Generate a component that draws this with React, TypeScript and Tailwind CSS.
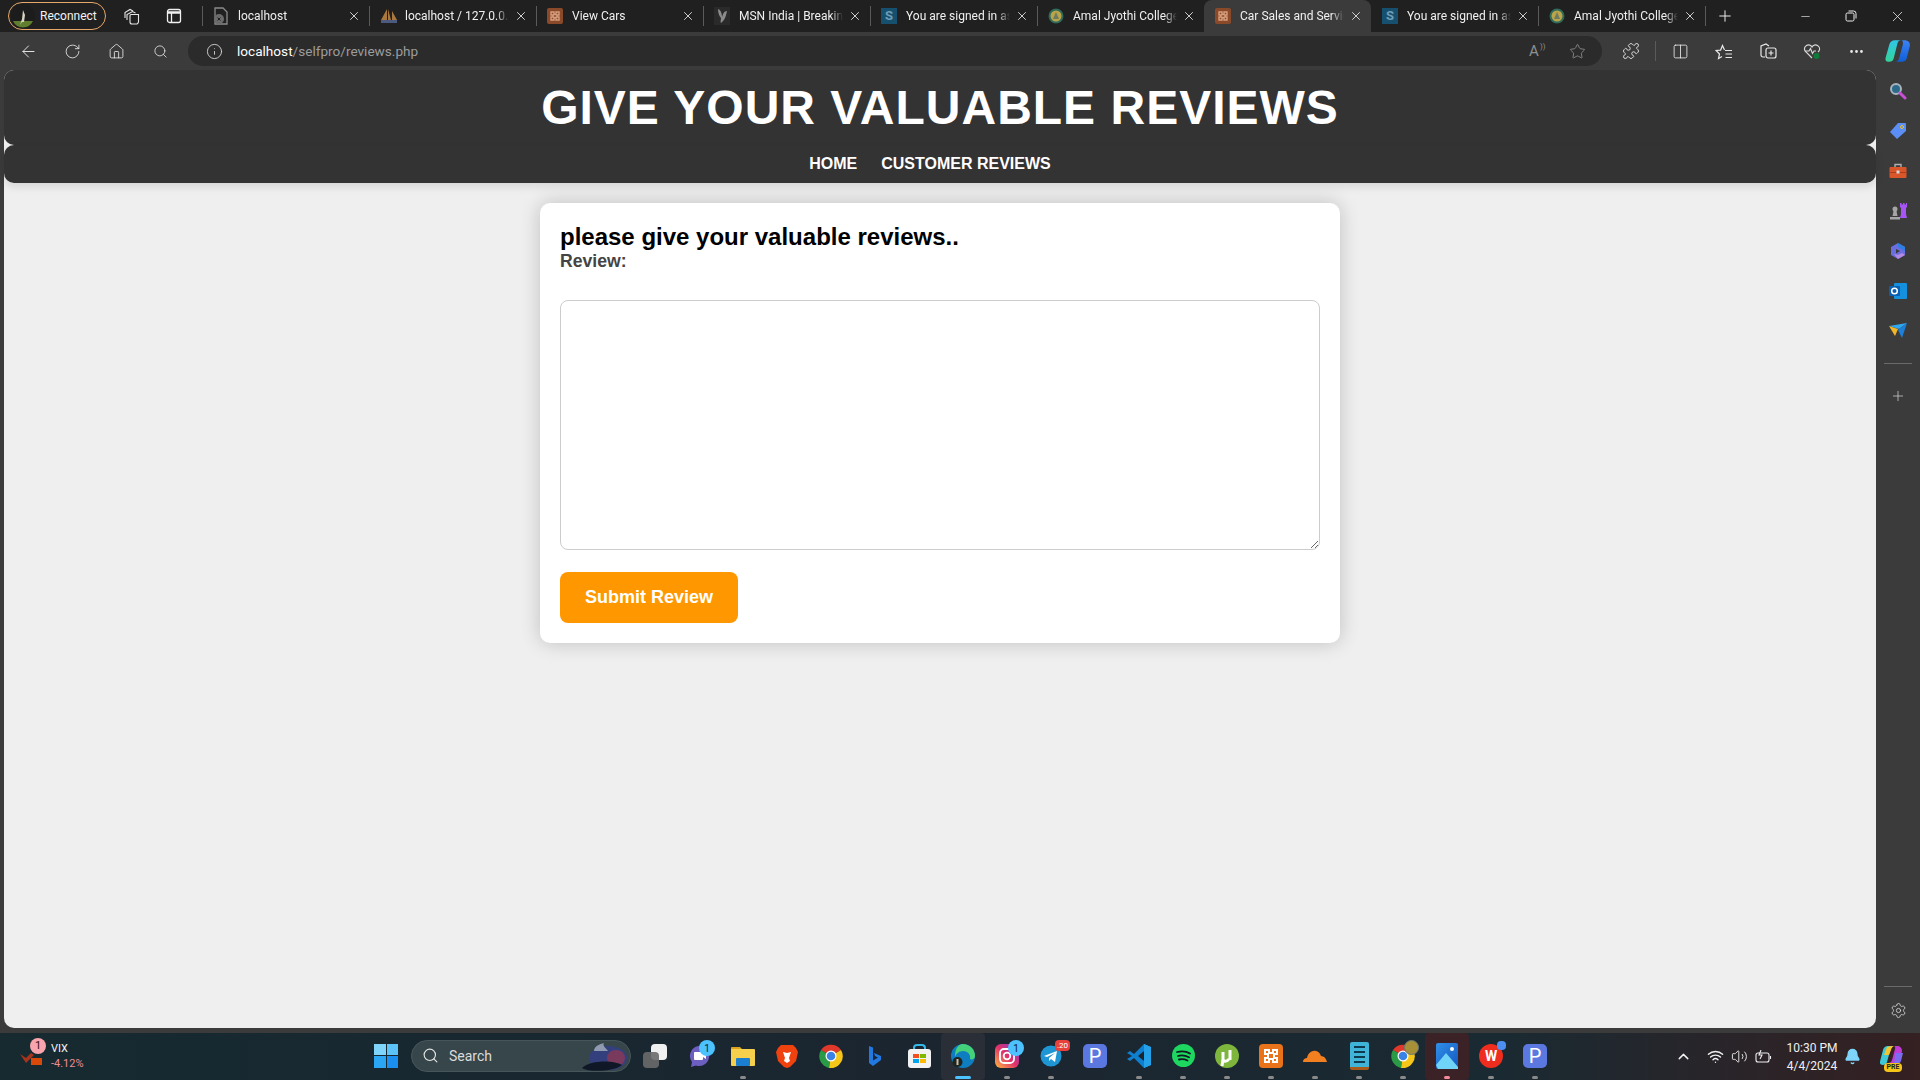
import { ArrowLeft, RotateCw, Home, Search, Info, Star, Puzzle, Columns2, Ellipsis, Plus, X, Minus, Settings, ChevronUp, Wifi, Volume2, Bell } from "lucide-react";
import type { ReactNode } from "react";

const XamppFav = () => (
    <svg width="16" height="16" viewBox="0 0 16 16"><rect width="16" height="16" rx="2" fill="#8a4a2a" /><path d="M4 4h3v2.500h2V4h3v3h-2v2h2v3H9V9.500H7V12H4V9h2V7H4z" fill="none" stroke="#d9a07f" strokeWidth="1.400" /></svg>
);
const DocFav = () => (
    <svg width="16" height="18" viewBox="0 0 16 18"><path d="M2 1h8l4 4v12H2z" fill="none" stroke="#8a8a8a" strokeWidth="1.300" /><circle cx="6" cy="12" r="5" fill="#6b6b6b" /><path d="M4.500 10.500l3 3m0-3l-3 3" stroke="#202020" /></svg>
);
const PmaFav = () => (
    <svg width="18" height="16" viewBox="0 0 18 16"><path d="M1 12L7 1v11zM8 1l3 11H8zM12 3l5 9h-5z" fill="#a9783f" /><rect x="1" y="12" width="16" height="3" fill="#4c5a80" /></svg>
);
const MsnFav = () => (
    <svg width="16" height="18" viewBox="0 0 16 18"><rect width="16" height="18" fill="#2a2a2a" /><path d="M4 2c3 1 4 5 4 8 1-3 2-6 5-6-1 5-2 9-6 12-1-1 0-3 0-5C5 9 4 5 4 2z" fill="#8b8b8b" /></svg>
);
const SFav = () => (
    <div className="w-4 h-4 bg-[#17506f] text-[#6f9db5] text-[13px] leading-4 font-bold text-center">S</div>
);
const CollegeFav = () => (
    <svg width="16" height="16" viewBox="0 0 16 16"><circle cx="8" cy="8" r="7.500" fill="#2f6a5a" /><circle cx="8" cy="8" r="5.500" fill="#b9a44a" /><path d="M8 4l3 7H5z" fill="#6d7a60" /></svg>
);

const tabs = [
    { title: "localhost", icon: <DocFav /> },
    { title: "localhost / 127.0.0.1 / selfpro", icon: <PmaFav /> },
    { title: "View Cars", icon: <XamppFav /> },
    { title: "MSN India | Breaking news", icon: <MsnFav /> },
    { title: "You are signed in as", icon: <SFav /> },
    { title: "Amal Jyothi College of", icon: <CollegeFav /> },
    { title: "Car Sales and Service", icon: <XamppFav />, active: true },
    { title: "You are signed in as", icon: <SFav /> },
    { title: "Amal Jyothi College of", icon: <CollegeFav /> },
];

const CopilotLogo = () => (
    <svg width="26" height="26" viewBox="0 0 24 24">
        <defs>
            <linearGradient id="cpa" x1="0" y1="0" x2="0" y2="1"><stop offset="0" stopColor="#2fc6e8" /><stop offset="1" stopColor="#34d399" /></linearGradient>
            <linearGradient id="cpb" x1="0" y1="0" x2="0" y2="1"><stop offset="0" stopColor="#3b82f6" /><stop offset="1" stopColor="#0f5fd8" /></linearGradient>
        </defs>
        <path d="M9 2h6c-2 0-3 1-3.500 3L8 19c-.5 2-2 3-4 3H3c-2 0-3-1.500-2.500-3.500L4 6c.6-2.500 2.500-4 5-4z" fill="url(#cpa)" />
        <path d="M15 2h3c3 0 5.500 2 5 5l-3 12c-.6 2-2.500 3-4.500 3H9c2 0 3.500-1 4-3l3.500-13c.4-2-.3-4-1.500-4z" fill="url(#cpb)" />
    </svg>
);

const CopilotPre = () => (
    <svg width="24" height="24" viewBox="0 0 24 24">
        <path d="M8 1h6c-2 0-3 1-3.500 3L7 17c-.5 2-2 3-4 3-2.500 0-3.500-1.500-3-3.500L3 5c.6-2.500 2.500-4 5-4z" fill="#3ec9d6" />
        <path d="M7 2c2-1 5-1 7-1-1.500.5-2.500 2-3 4L9 10H4z" fill="#f4c430" />
        <path d="M14 1h3c3 0 5 2 5 5l-2 9c-.5 2-2.500 3-4.500 3H8c2 0 3.500-1 4-3l3-11c.4-1.500 0-3-1-3z" fill="#c23bd4" />
        <path d="M15 8h8l-2 8c-.5 2-2.500 3-4.500 3H11c2 0 3-1 3.500-3z" fill="#7a6cf0" />
    </svg>
);

const Tab = ({ title, icon, active, sep }: { title: string; icon: ReactNode; active?: boolean; sep: boolean }) => (
    <div className={`relative w-[167px] h-8 flex items-center shrink-0 ${active ? "bg-[#3b3b3b] rounded-t-lg" : ""}`}>
        {sep && <div className="absolute left-0 top-1.5 h-5 w-px bg-[#5a5a5a]" />}
        <div className="w-[38px] pl-[11px] shrink-0 flex items-center">{icon}</div>
        <div className="w-[104px] overflow-hidden whitespace-nowrap text-xs -ml-[2px] text-[#f0f0f0] [mask-image:linear-gradient(90deg,#000_88%,transparent)]">{title}</div>
        <X size={14} strokeWidth={1.500} className="ml-[5px] text-[#e6e6e6]" />
    </div>
);

const TabStrip = () => (
    <div className="h-8 bg-[#202020] flex items-center">
        <div className="ml-2 w-[98px] h-[28px] rounded-full border border-[#e8a868] flex items-center pl-[2px]">
            <svg width="24" height="24" viewBox="0 0 24 24">
                <circle cx="12" cy="12" r="12" fill="#1c1c1c" />
                <path d="M2 17h20a11 11 0 0 1-20 0z" fill="#5f7f2e" />
                <path d="M12 6l2 5-1 7h-2l-2 3 2-6z" fill="#d8d2c0" />
            </svg>
            <span className="ml-[5px] text-xs text-[#f2f2f2] font-['Roboto',sans-serif]">Reconnect</span>
        </div>
        <div className="w-[46px] ml-[3px] flex justify-center">
            <svg width="18" height="18" viewBox="0 0 18 18" fill="none" stroke="#e6e6e6" strokeWidth="1.100"><path d="M2 11V5.500L7 2.500l3 1.500" /><path d="M4 13V7.500L9.500 4.500l3 1.500" /><path d="M7 8.500a1 1 0 0 1 1-1h7.500v7a2.500 2.500 0 0 1-2.500 2.500H9a2 2 0 0 1-2-2z" /></svg>
        </div>
        <div className="w-[38px] flex justify-center">
            <svg width="16" height="16" viewBox="0 0 16 16" fill="none" stroke="#f0f0f0" strokeWidth="1.300"><rect x="1.500" y="1.500" width="13" height="13" rx="2" /><path d="M1.500 4.500h13" strokeWidth="2.500" /><path d="M5.500 5v9" /></svg>
        </div>
        <div className="ml-[9px] flex font-['Roboto',sans-serif]">
            {tabs.map((t, i) => (
                <Tab key={i} title={t.title} icon={t.icon} active={t.active} sep={i !== 6 && i !== 7} />
            ))}
        </div>
        <div className="w-px h-5 bg-[#5a5a5a]" />
        <Plus size={18} strokeWidth={1.300} className="ml-[10px] text-[#f0f0f0]" />
        <div className="ml-auto flex items-center">
            <div className="w-[46px] flex justify-center"><Minus size={13} strokeWidth={1.200} className="text-[#eee]" /></div>
            <div className="w-[46px] flex justify-center">
                <svg width="12" height="12" viewBox="0 0 12 12" fill="none" stroke="#eee"><rect x="1" y="3" width="8" height="8" rx="1.500" /><path d="M3.500 1h5A2.500 2.500 0 0 1 11 3.500v5" /></svg>
            </div>
            <div className="w-[46px] flex justify-center"><X size={17} strokeWidth={1.100} className="text-[#eee]" /></div>
        </div>
    </div>
);

const ToolBtn = ({ children }: { children: ReactNode }) => (
    <div className="w-[44px] h-[38px] flex items-center justify-center shrink-0 text-[#e8e8e8]">{children}</div>
);

const Toolbar = () => (
    <div className="h-[38px] bg-[#3b3b3b] flex items-center pl-1.5">
        <ToolBtn><ArrowLeft size={19} strokeWidth={1.200} /></ToolBtn>
        <ToolBtn><RotateCw size={17} strokeWidth={1.200} /></ToolBtn>
        <ToolBtn><Home size={17} strokeWidth={1.200} /></ToolBtn>
        <ToolBtn><Search size={15} strokeWidth={1.300} /></ToolBtn>
        <div className="ml-1.5 w-[1414px] h-[30px] rounded-full bg-[#2b2b2b] flex items-center pl-[18px] pr-[16px]">
            <Info size={17} strokeWidth={1.200} className="text-[#e0e0e0]" />
            <div className="ml-[14px] text-[13.6px] text-[#9c9c9c] font-['Roboto',sans-serif]"><span className="text-white">localhost</span>/selfpro/reviews.php</div>
            <div className="ml-auto flex items-center gap-[23px] text-[#8f8f8f]">
                <div className="relative w-[17px] text-[15px] leading-4 font-['Roboto',sans-serif]">A<span className="absolute -top-1 left-[11px] text-[8px]">))</span></div>
                <Star size={17} strokeWidth={1.200} />
            </div>
        </div>
        <div className="w-[7px]" />
        <ToolBtn><Puzzle size={18} strokeWidth={1.200} /></ToolBtn>
        <div className="w-px h-5 mx-[2px] bg-[#5a5a5a]" />
        <ToolBtn><Columns2 size={17} strokeWidth={1.200} /></ToolBtn>
        <ToolBtn>
            <svg width="18" height="18" viewBox="0 0 18 18" fill="none" stroke="#e8e8e8" strokeWidth="1.200"><path d="M7 14.500l-3.500 2 1-4.500L1 8.500l4.600-.4L7.500 3.500l2 4.500" /><path d="M10 8.500h7M10.500 12h6.500M10.500 15.500h6.500" /></svg>
        </ToolBtn>
        <ToolBtn>
            <svg width="18" height="18" viewBox="0 0 18 18" fill="none" stroke="#e8e8e8" strokeWidth="1.200"><path d="M6 15H4a2 2 0 0 1-2-2V4l5-2 3 2" /><rect x="7" y="6" width="10" height="10" rx="2" /><path d="M12 8.500v5M9.500 11h5" /></svg>
        </ToolBtn>
        <ToolBtn>
            <svg width="20" height="20" viewBox="0 0 20 20" fill="none" stroke="#d8d8d8" strokeWidth="1.200"><path d="M10 17L3 10a4 4 0 0 1 7-4 4 4 0 0 1 7 4l-1 1" /><path d="M3 10h4l1.500-2.500 2 5L12 10h2" /><circle cx="14.500" cy="15" r="3" fill="#0f7b3a" stroke="none" /></svg>
        </ToolBtn>
        <ToolBtn><Ellipsis size={17} /></ToolBtn>
        <div className="ml-[7px]"><CopilotLogo /></div>
    </div>
);

const Header = () => (
    <div className="font-['Liberation_Sans',Arial,sans-serif]">
        <div className="h-[75px] bg-[#333333] rounded-[10px] flex items-center justify-center">
            <h1 className="text-5xl font-bold text-white tracking-[1px] leading-none">GIVE YOUR VALUABLE REVIEWS</h1>
        </div>
        <div className="h-[38px] bg-[#333333] rounded-[10px] flex items-center justify-center gap-6 pr-5 shadow-[0_4px_8px_rgba(0,0,0,0.1)]">
            <a className="text-base font-bold text-white">HOME</a>
            <a className="text-base font-bold text-white">CUSTOMER REVIEWS</a>
        </div>
    </div>
);

const ReviewCard = () => (
    <div className="mt-5 mx-auto w-[800px] h-[440px] bg-white rounded-[10px] p-5 shadow-[0_0_20px_rgba(0,0,0,0.2)] font-['Liberation_Sans',Arial,sans-serif]">
        <h2 className="text-2xl leading-[28px] font-bold text-black">please give your valuable reviews..</h2>
        <label className="block text-[17.6px] leading-5 font-bold text-[#444444]">Review:</label>
        <textarea className="block mt-[29px] w-[760px] h-[250px] border border-[#cccccc] rounded-lg bg-white" />
        <button className="block mt-[22px] w-[178px] h-[51px] pb-[2px] bg-[#ff9800] rounded-lg text-white text-lg font-bold">Submit Review</button>
    </div>
);

const SideIcon = ({ children }: { children: ReactNode }) => (
    <div className="h-[40px] flex items-center justify-center">{children}</div>
);

const Sidebar = () => (
    <div className="w-[44px] shrink-0 flex flex-col pt-px">
        <SideIcon>
            <svg width="18" height="18" viewBox="0 0 18 18"><circle cx="7" cy="7" r="5" fill="#2c6a8a" stroke="#a9b4bd" strokeWidth="2" /><path d="M11 11l5 5" stroke="#c94fd8" strokeWidth="3" strokeLinecap="round" /></svg>
        </SideIcon>
        <SideIcon>
            <svg width="18" height="18" viewBox="0 0 18 18"><path d="M1 10l8-9h7a1 1 0 0 1 1 1v7l-9 8z" fill="#5b8ff5" /><circle cx="13" cy="5" r="1.500" fill="none" stroke="#f0c020" /></svg>
        </SideIcon>
        <SideIcon>
            <svg width="18" height="18" viewBox="0 0 18 18"><path d="M6 5V2.500h6V5" fill="none" stroke="#b0b0b0" strokeWidth="1.400" /><rect x="0.500" y="5" width="17" height="11" rx="1" fill="#d9562b" /><rect x="0.500" y="10" width="17" height="1" fill="#a83e1c" /><rect x="7.500" y="8.500" width="3" height="3" fill="#d8d8d8" /></svg>
        </SideIcon>
        <SideIcon>
            <svg width="18" height="18" viewBox="0 0 18 18"><path d="M11 1h1.500v1.500H14V1h1.500v1.500H17V1h1v4l-1 1v6l1 4h-7l1-4V6l-1-1z" fill="#a855f7" /><circle cx="6" cy="7" r="2.500" fill="#a5a5a5" /><path d="M4.500 9h3l1 5H3.500zM1 15h10v2.500H1z" fill="#a5a5a5" /></svg>
        </SideIcon>
        <SideIcon>
            <svg width="18" height="18" viewBox="0 0 18 18"><path d="M9 1l7 4v8l-7 4-7-4V5z" fill="#6a6ee0" /><path d="M9 1l7 4v4L9 5z" fill="#2f7fe0" /><path d="M9 17l7-4-3-2-4 2-4-1z" fill="#b48ae0" /><path d="M7 7l4 2-4 2.500z" fill="#3b3b3b" /></svg>
        </SideIcon>
        <SideIcon>
            <svg width="18" height="18" viewBox="0 0 18 18"><rect x="5" y="1" width="13" height="16" rx="1" fill="#1490df" /><rect x="0" y="4" width="11" height="10" rx="1" fill="#0a5fb0" /><circle cx="5.500" cy="9" r="2.800" fill="none" stroke="#fff" strokeWidth="1.500" /></svg>
        </SideIcon>
        <SideIcon>
            <svg width="18" height="18" viewBox="0 0 18 18"><path d="M0 4l18-3-8 6z" fill="#2ea8f0" /><path d="M18 1l-5 15-4-8z" fill="#1d7fd8" /><path d="M0 4l9 3-3 7z" fill="#f0b429" /></svg>
        </SideIcon>
        <div className="mx-auto mt-[12px] w-7 h-px bg-[#6a6a6a]" />
        <div className="mt-[12px] h-[40px] flex items-center justify-center text-[#d5d5d5]"><Plus size={16} strokeWidth={1.100} /></div>
        <div className="mt-auto mx-auto w-7 h-px bg-[#6a6a6a]" />
        <div className="h-[46px] flex items-center justify-center text-[#d5d5d5]"><Settings size={17} strokeWidth={1.200} /></div>
    </div>
);

const Badge = ({ text, className }: { text: string; className: string }) => (
    <div className={`absolute flex items-center justify-center text-[8px] font-['Roboto',sans-serif] ${className}`}>{text}</div>
);

const Dot = ({ color = "bg-[#8a8a8a]" }: { color?: string }) => (
    <div className={`absolute bottom-[1px] left-1/2 -translate-x-1/2 w-[6px] h-[3px] rounded-full ${color}`} />
);

const TaskIcon = ({ children, dot, className }: { children: ReactNode; dot?: boolean; className?: string }) => (
    <div className={`relative w-[44px] h-[47px] shrink-0 flex items-center justify-center pb-[2px] ${className ?? ""}`}>
        {children}
        {dot && <Dot />}
    </div>
);

const PLogo = () => (
    <div className="w-6 h-6 rounded-[5px] bg-[#5b78e0] text-white text-[20px] leading-6 text-center font-['Roboto',sans-serif]">P</div>
);

const ChromeLogo = () => (
    <svg width="24" height="24" viewBox="0 0 24 24">
        <path d="M12 12L2 6a12 12 0 0 1 20 0z" fill="#e0392b" />
        <path d="M12 12L2 6a12 12 0 0 0 8 18z" fill="#2a9a46" />
        <path d="M12 12l10-6a12 12 0 0 1-12 18z" fill="#f5c518" />
        <circle cx="12" cy="12" r="5.500" fill="#fff" />
        <circle cx="12" cy="12" r="4.300" fill="#3b82e6" />
    </svg>
);

const Taskbar = () => (
    <div className="h-[47px] flex items-center pr-4 bg-[linear-gradient(90deg,#162a30,#1b2530_50%,#1a2a32_78%,#352022)] font-['Roboto',sans-serif]">
        <div className="relative w-[51px] h-full shrink-0">
            <svg width="24" height="20" viewBox="0 0 24 20" className="absolute left-[20px] top-[14px]"><path d="M0 7l6 4 5-5 3 2-8 8z" fill="#a8341c" /><rect x="11" y="11" width="11" height="7" fill="#d94a0a" /></svg>
            <Badge text="1" className="left-[30px] top-[5px] w-4 h-4 rounded-full bg-[#f8a5ad] text-[#3a1010] text-[11px]" />
        </div>
        <div className="w-[59px] shrink-0 text-[11px] leading-[15px] pb-[1px]">
            <div className="text-[#f2f2f2]">VIX</div>
            <div className="text-[#f08a92]">-4.12%</div>
        </div>
        <div className="ml-[264px] w-[24px] h-[24px] mb-[2px] shrink-0 grid grid-cols-2 gap-[1px]">
            <div className="bg-[#7fd4fb]" /><div className="bg-[#5cc3f9]" /><div className="bg-[#2ba6f5]" /><div className="bg-[#1b8ff0]" />
        </div>
        <div className="ml-[13px] w-[220px] h-[32px] mb-[2px] shrink-0 rounded-full bg-[#36464b] border border-[#46565b] flex items-center pl-[10px] relative overflow-hidden">
            <Search size={17} strokeWidth={1.600} className="text-[#e6e6e6]" />
            <span className="ml-[10px] text-sm text-[#dcdcdc]">Search</span>
            <svg width="50" height="32" viewBox="0 0 50 32" className="absolute right-0 top-0"><ellipse cx="28" cy="17" rx="19" ry="12" fill="#34407e" /><ellipse cx="36" cy="17" rx="9" ry="8" fill="#7a3a5e" /><path d="M14 10C14 5 20 3 24 2c-2 3 2 5 4 8z" fill="#8f9ab0" /><path d="M2 27c8-8 32-8 40-3-6 6-32 8-40 3z" fill="#101828" /></svg>
        </div>
        <div className="ml-[2px] flex">
            <TaskIcon>
                <div className="relative w-6 h-6"><div className="absolute right-0 top-0 w-4 h-4 rounded-sm bg-[#f0f0f0]" /><div className="absolute left-0 bottom-0 w-4 h-4 rounded-sm bg-[#6a6a6a]/90" /></div>
            </TaskIcon>
            <TaskIcon>
                <svg width="23" height="25" viewBox="0 0 23 25"><path d="M11 3a10 10 0 1 1-3 19.500L3 24l1-5A10 10 0 0 1 11 3z" fill="#6c5fc0" /><rect x="6" y="9" width="9" height="8" rx="1" fill="#fff" /><path d="M15 12l3-2v6l-3-2z" fill="#fff" /></svg>
                <Badge text="1" className="right-[6px] top-[7px] w-4 h-4 rounded-full bg-[#4cc2ff] text-[#102030] text-[10px]" />
            </TaskIcon>
            <TaskIcon dot>
                <svg width="24" height="22" viewBox="0 0 24 22"><path d="M0 3a1 1 0 0 1 1-1h8l2 2v16H0z" fill="#d9a520" /><rect y="4" width="24" height="17" rx="1" fill="#f6d04d" /><rect x="5" y="13" width="14" height="8" rx="1" fill="#1a7fd0" /></svg>
            </TaskIcon>
            <TaskIcon>
                <svg width="22" height="24" viewBox="0 0 22 24"><path d="M5 1h12l3 3 2 4-2 9-6 6-3 1-3-1-6-6-2-9 2-4z" fill="#f0420f" /><path d="M7 8l4 1 4-1-2 6 1 3-3 2-3-2 1-3z" fill="#fff" /></svg>
            </TaskIcon>
            <TaskIcon><ChromeLogo /></TaskIcon>
            <TaskIcon>
                <svg width="14" height="20" viewBox="0 0 14 20"><path d="M1 0l4 1.500v13l5-3-3-1.500-1-3 7 3v4L5 20l-4-3z" fill="#2078e0" /></svg>
            </TaskIcon>
            <TaskIcon>
                <div className="relative w-[23px] h-[24px]">
                    <div className="absolute left-[5px] top-0 w-[13px] h-[8px] border-2 border-b-0 border-[#35b8e8] rounded-t" />
                    <div className="absolute left-0 bottom-0 w-[23px] h-[19px] bg-[#f2f2f2] rounded-[3px] grid grid-cols-2 gap-[1px] p-[5px]">
                        <div className="bg-[#f25022]" /><div className="bg-[#7fba00]" /><div className="bg-[#00a4ef]" /><div className="bg-[#ffb900]" />
                    </div>
                </div>
            </TaskIcon>
            <TaskIcon className="bg-[#2a2e36] rounded">
                <svg width="24" height="24" viewBox="0 0 24 24"><circle cx="12" cy="12" r="12" fill="#0f7ec0" /><path d="M12 0a12 12 0 0 1 12 12c0 3-3 4-5 3 1-4-2-8-7-8-4 0-7 3-8 6C4 5 7 0 12 0z" fill="#45d17a" /><circle cx="6.500" cy="18" r="5" fill="#20241c" /><path d="M5.500 15h2v6h-2z" fill="#c8c0a8" /></svg>
                <div className="absolute bottom-[1px] left-1/2 -translate-x-1/2 w-4 h-[3px] rounded-full bg-[#4cc2ff]" />
            </TaskIcon>
            <TaskIcon dot>
                <svg width="24" height="24" viewBox="0 0 24 24">
                    <defs><linearGradient id="ig" x1="0" y1="1" x2="1" y2="0"><stop offset="0" stopColor="#fdbb3f" /><stop offset="0.500" stopColor="#e1306c" /><stop offset="1" stopColor="#7a3fd0" /></linearGradient></defs>
                    <rect width="24" height="24" rx="6" fill="url(#ig)" /><rect x="5" y="5" width="14" height="14" rx="4" fill="none" stroke="#fff" strokeWidth="1.800" /><circle cx="12" cy="12" r="3.300" fill="none" stroke="#fff" strokeWidth="1.800" />
                </svg>
                <Badge text="1" className="right-[5px] top-[7px] w-4 h-4 rounded-full bg-[#4cc2ff] text-[#102030] text-[10px]" />
            </TaskIcon>
            <TaskIcon dot>
                <svg width="22" height="22" viewBox="0 0 22 22"><circle cx="11" cy="11" r="10.500" fill="#1f96d4" /><path d="M4 11l13-5-2 11-4-3-2 2v-3l6-5-8 4z" fill="#fff" /></svg>
                <Badge text=".20" className="right-[3px] top-[7px] w-[15px] h-[11px] rounded-sm bg-[#e8413c] text-white" />
            </TaskIcon>
            <TaskIcon><PLogo /></TaskIcon>
            <TaskIcon dot>
                <svg width="24" height="24" viewBox="0 0 24 24"><path d="M17 0l7 3v18l-7 3L7 14l-4 3-3-2 5-3-5-3 3-2 4 3z" fill="#0f7fd0" /><path d="M17 7v10l-6-5z" fill="#1b2530" /><path d="M17 0l7 3v18l-7 3z" fill="#23a2ea" /></svg>
            </TaskIcon>
            <TaskIcon dot>
                <svg width="23" height="23" viewBox="0 0 23 23" fill="none"><circle cx="11.500" cy="11.500" r="11.500" fill="#1ed760" /><path d="M5 8c4-1 9-1 13 1.500M6 12c3.500-1 7.500-.5 11 1.300M7 15.500c3-.7 6-.3 8.500 1" stroke="#101820" strokeWidth="1.800" strokeLinecap="round" /></svg>
            </TaskIcon>
            <TaskIcon dot>
                <svg width="24" height="24" viewBox="0 0 24 24"><circle cx="12" cy="12" r="12" fill="#7eb53c" /><path d="M8 8v7c0 3 4 3 6 0M15 6v10M8 15l-1 7" stroke="#fff" strokeWidth="3" fill="none" /></svg>
            </TaskIcon>
            <TaskIcon dot>
                <div className="w-6 h-6 rounded bg-[#e8731a] flex items-center justify-center">
                    <svg width="16" height="16" viewBox="0 0 16 16" fill="none" stroke="#fff" strokeWidth="2"><path d="M2 2h4v3h4V2h4v4h-3v4h3v4h-4v-3H6v3H2v-4h3V6H2z" /></svg>
                </div>
            </TaskIcon>
            <TaskIcon dot>
                <svg width="24" height="14" viewBox="0 0 24 14"><path d="M0 13c0-3 2-4 4-4 1-5 5-8 9-7 2 .5 4 2 5 5 3 0 5 2 6 6z" fill="#f38020" /></svg>
            </TaskIcon>
            <TaskIcon dot>
                <div className="w-[19px] h-[28px] rounded-[2px] bg-[#3fb4d8] border-b-[3px] border-[#a85a1a] flex flex-col gap-[3px] justify-center px-[4px]">
                    <div className="h-[2px] bg-[#0e3a50]" /><div className="h-[2px] bg-[#0e3a50]" /><div className="h-[2px] bg-[#0e3a50]" /><div className="h-[2px] bg-[#0e3a50]" />
                </div>
            </TaskIcon>
            <TaskIcon dot>
                <ChromeLogo />
                <div className="absolute right-[6px] top-[7px] w-[15px] h-[15px] rounded-full bg-[#a89038] border border-[#6a7a70]" />
            </TaskIcon>
            <TaskIcon className="bg-[#3a2226] rounded">
                <svg width="22" height="26" viewBox="0 0 22 26"><defs><linearGradient id="ph" x1="0" y1="0" x2="1" y2="1"><stop offset="0" stopColor="#2f8fe8" /><stop offset="1" stopColor="#1557c0" /></linearGradient></defs><rect width="22" height="26" rx="2" fill="url(#ph)" /><circle cx="16" cy="6" r="2" fill="#fff" /><path d="M0 22l10-12 12 14v2H2z" fill="#6fd4f8" /></svg>
                <div className="absolute bottom-[1px] left-1/2 -translate-x-1/2 w-[6px] h-[3px] rounded-full bg-[#f48a9a]" />
            </TaskIcon>
            <TaskIcon dot>
                <div className="w-6 h-6 rounded-full bg-[#ee2d1e] text-white text-[14px] leading-6 text-center font-bold">W</div>
                <div className="absolute right-[7px] top-[8px] w-[9px] h-[9px] rounded-sm bg-[#4c8ff0]" />
            </TaskIcon>
            <TaskIcon dot><PLogo /></TaskIcon>
        </div>
        <div className="ml-auto w-[24px] flex justify-center text-[#f0f0f0]"><ChevronUp size={17} strokeWidth={2} /></div>
        <div className="ml-[7px] w-[26px] flex justify-center text-[#f0f0f0]"><Wifi size={17} /></div>
        <div className="w-[22px] flex justify-center text-[#f0f0f0]"><Volume2 size={17} strokeWidth={1.300} /></div>
        <div className="w-[26px] flex justify-center">
            <svg width="17" height="14" viewBox="0 0 17 14" fill="none" stroke="#f0f0f0" strokeWidth="1.100"><rect x="1" y="3" width="13" height="9" rx="2" /><path d="M15.500 6v3" /><path d="M6 0L4 5h3l-2 4" /></svg>
        </div>
        <div className="ml-2 w-[56px] text-center text-xs leading-[18px] text-[#f0f0f0] whitespace-nowrap">
            <div>10:30 PM</div>
            <div>4/4/2024</div>
        </div>
        <div className="w-[24px] flex justify-center text-[#7fd4fb]"><Bell size={17} fill="#7fd4fb" /></div>
        <div className="relative ml-4 w-[24px]">
            <CopilotPre />
            <div className="absolute -bottom-[3px] left-[4px] w-[18px] h-[9px] rounded-sm bg-[#f5c518] text-[7px] leading-[9px] text-center font-bold text-[#222]">PRE</div>
        </div>
    </div>
);

export default function App() {
    return (
        <div className="h-screen w-screen overflow-hidden flex flex-col bg-[#3b3b3b]">
            <TabStrip />
            <Toolbar />
            <div className="flex-1 flex min-h-0 pl-1">
                <div className="w-[1872px] shrink-0 h-[958px] bg-[#efefef] rounded-[10px]">
                    <Header />
                    <ReviewCard />
                </div>
                <Sidebar />
            </div>
            <Taskbar />
        </div>
    );
}
